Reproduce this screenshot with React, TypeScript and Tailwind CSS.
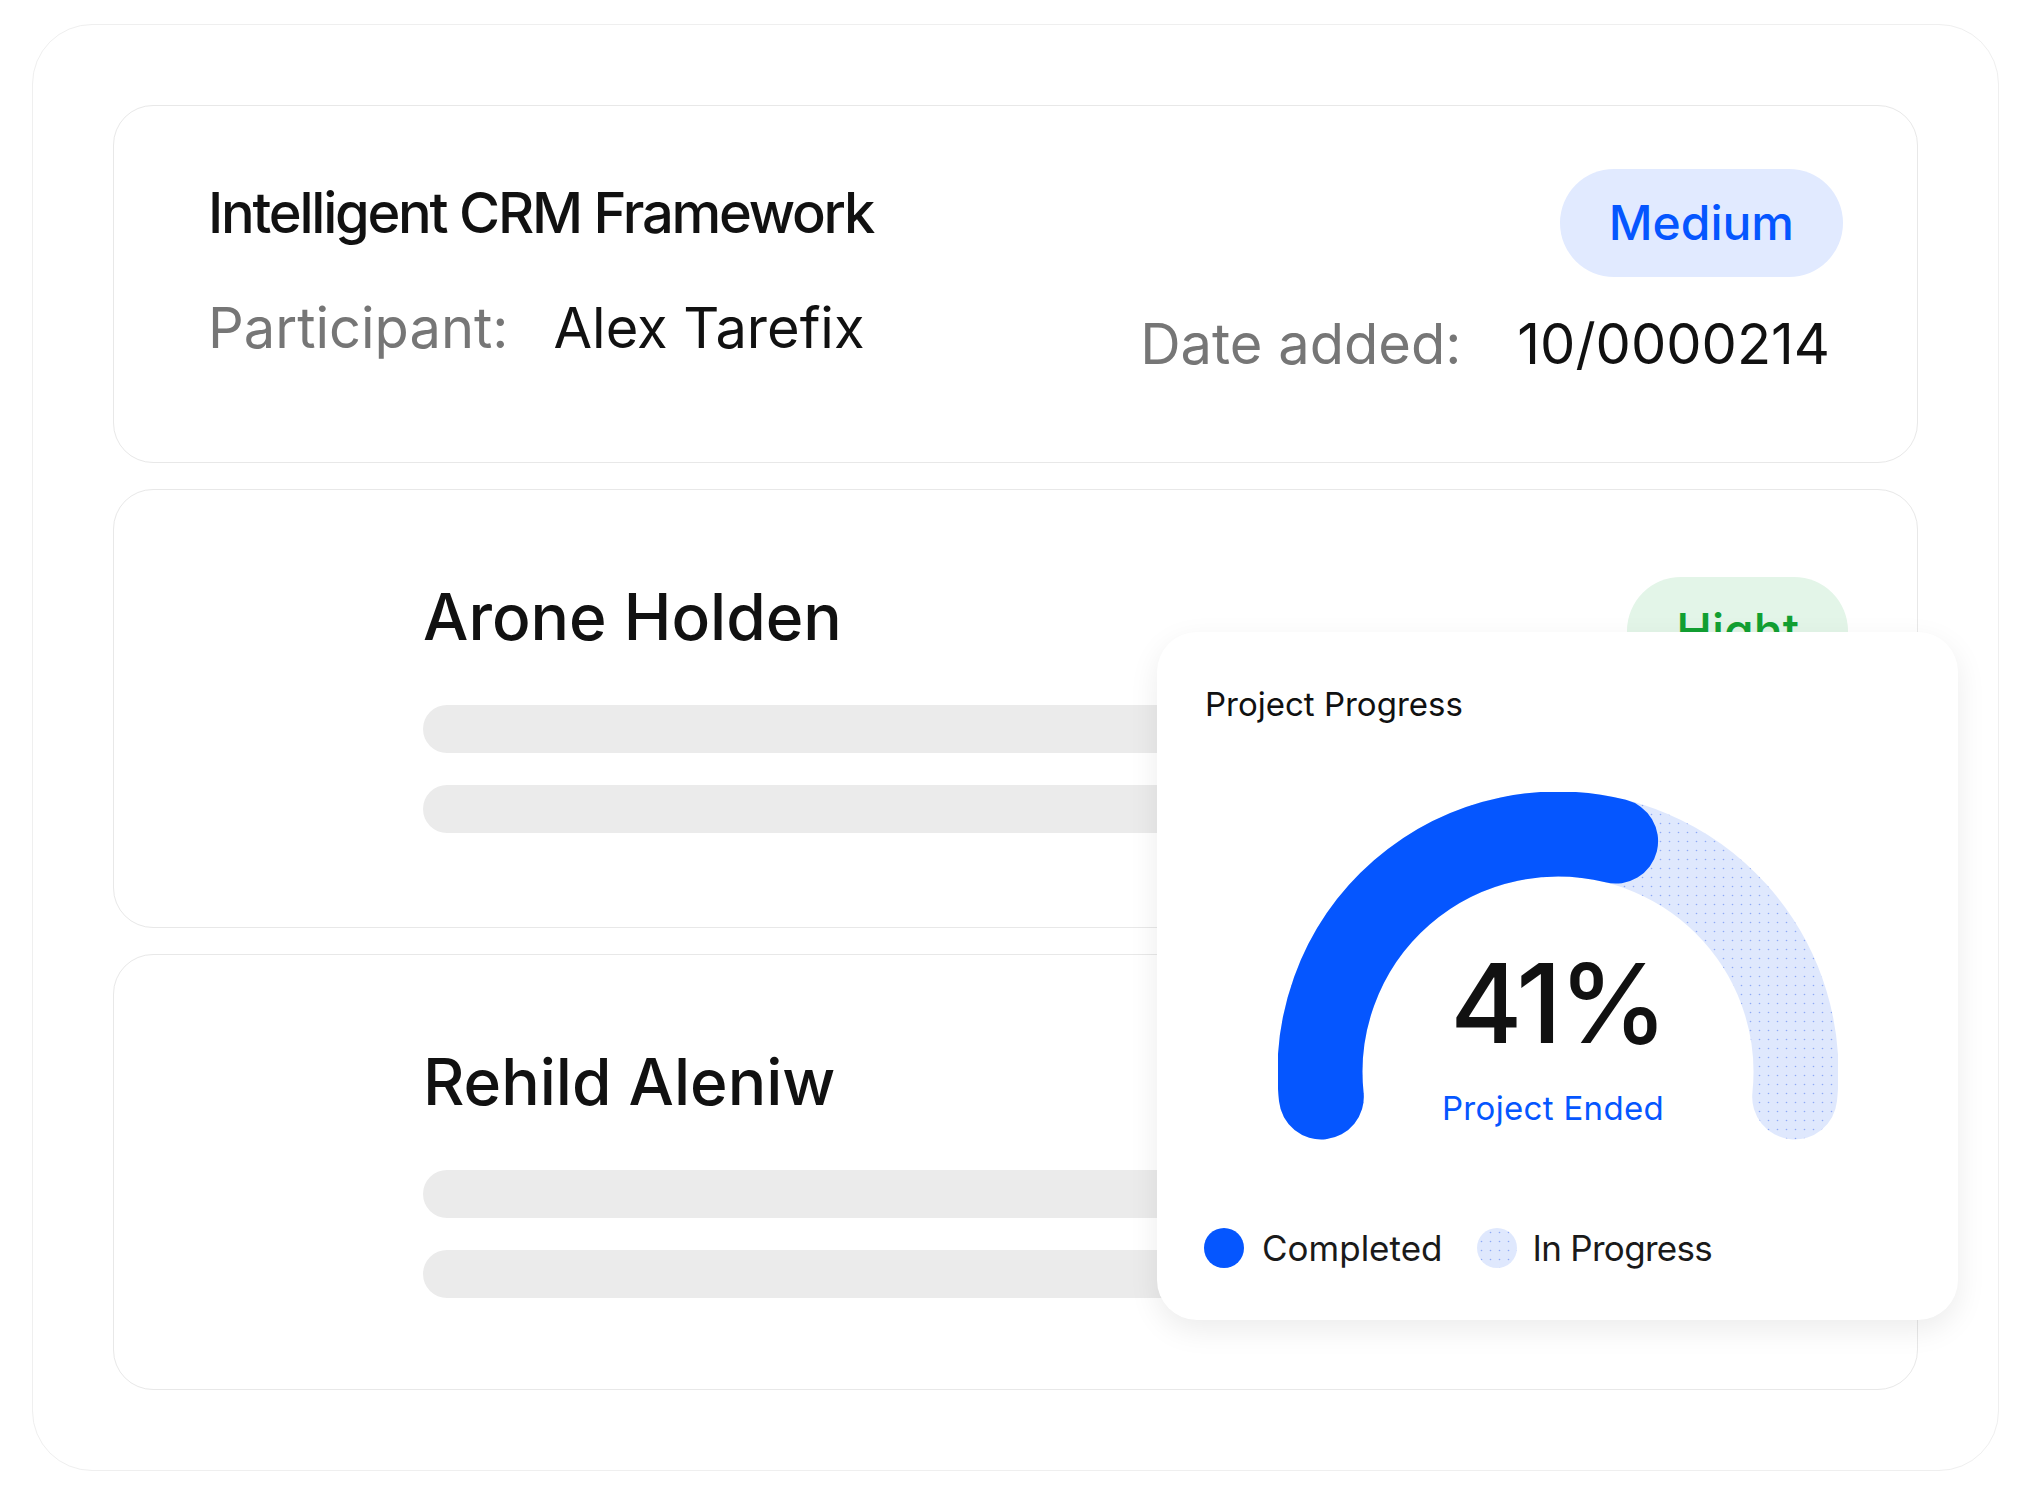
import React from 'react';

const font = { fontFamily: 'Inter, "Noto Sans", sans-serif' };

// gauge geometry (svg box 560x360, centre 280,280)
const CX = 280;
const CY = 280;
const R = 238;
function pt(deg: number) {
  const a = (deg * Math.PI) / 180;
  return `${(CX + R * Math.cos(a)).toFixed(1)} ${(CY - R * Math.sin(a)).toFixed(1)}`;
}
const trackPath = `M ${pt(186)} A ${R} ${R} 0 1 1 ${pt(-6)}`;
const progressPath = `M ${pt(186)} A ${R} ${R} 0 0 1 ${pt(76)}`;

function Badge({ label, tone }: { label: string; tone: 'blue' | 'green' }) {
  const cls =
    tone === 'blue'
      ? 'bg-[#e1eaff] text-[#0556ff]'
      : 'bg-[#e3f5e8] text-[#12a032]';
  return (
    <div className={`flex h-[108px] items-center rounded-full px-[49px] text-[48px] font-medium leading-none ${cls}`}>
      {label}
    </div>
  );
}

function PersonCard({ name, badge, height }: { name: string; badge?: React.ReactNode; height: string }) {
  return (
    <div className={`flex rounded-[40px] border border-[#e8e8e8] bg-white ${height}`}>
      <div className="flex flex-1 flex-col pl-[309px] pr-[80px] pt-[95px]">
        <div className="text-[64px] font-medium leading-[64px] text-[#111]">{name}</div>
        <div className="mt-[56px] h-[48px] w-full rounded-full bg-[#ebebeb]" />
        <div className="mt-[32px] h-[48px] w-full rounded-full bg-[#ebebeb]" />
      </div>
      {badge && <div className="pr-[69px] pt-[87px]">{badge}</div>}
    </div>
  );
}

function ProgressPopup() {
  return (
    <div className="absolute left-[1124px] top-[607px] flex h-[688px] w-[801px] flex-col rounded-[40px] bg-white shadow-[0_10px_30px_rgba(0,0,0,0.08)]">
      <div className="pl-[48px] pt-[56px] text-[33px] leading-[33px] text-[#111]">Project Progress</div>

      <div className="relative mx-auto mt-[71px] h-[360px] w-[560px]">
        <svg width="560" height="360" viewBox="0 0 560 360" className="block">
          <defs>
            <pattern id="dots" width="9" height="9" patternUnits="userSpaceOnUse">
              <rect width="9" height="9" fill="#dfe8fd" />
              <circle cx="4.5" cy="4.5" r="0.8" fill="#8ea9f5" />
            </pattern>
          </defs>
          <path d={trackPath} fill="none" stroke="url(#dots)" strokeWidth="85" strokeLinecap="round" />
          <path d={progressPath} fill="none" stroke="#0556ff" strokeWidth="85" strokeLinecap="round" />
        </svg>
        <div className="absolute inset-x-0 top-[156px] text-center text-[110px] font-medium leading-[110px] tracking-[-0.03em] text-[#111]">
          41%
        </div>
        <div className="absolute inset-x-0 top-[300px] pr-[9px] text-center text-[33px] leading-[33px] tracking-[0.01em] text-[#0556ff]">
          Project Ended
        </div>
      </div>

      <div className="mt-[76px] flex items-center pl-[47px] text-[35px] leading-none text-[#1a1a1a]">
        <span className="h-[40px] w-[40px] rounded-full bg-[#0556ff]" />
        <span className="ml-[18px]">Completed</span>
        <svg width="40" height="40" viewBox="0 0 40 40" className="ml-[35px]">
          <defs>
            <pattern id="dots2" width="9" height="9" patternUnits="userSpaceOnUse">
              <rect width="9" height="9" fill="#dfe8fd" />
              <circle cx="4.5" cy="4.5" r="0.8" fill="#8ea9f5" />
            </pattern>
          </defs>
          <circle cx="20" cy="20" r="20" fill="url(#dots2)" />
        </svg>
        <span className="ml-[15px] tracking-[-0.02em]">In Progress</span>
      </div>
    </div>
  );
}

export default function App() {
  return (
    <div className="min-h-screen bg-white pl-[32px] pt-[24px]" style={font}>
      <div className="relative flex w-[1967px] flex-col gap-[26px] rounded-[60px] border border-[#efefef] bg-white p-[80px]">
        {/* Project summary */}
        <div className="flex h-[358px] justify-between rounded-[40px] border border-[#e8e8e8] bg-white">
          <div className="pl-[94px] pt-[79px]">
            <div className="text-[56px] font-medium leading-[56px] tracking-[-0.04em] text-[#111]">
              Intelligent CRM Framework
            </div>
            <div className="mt-[59px] flex text-[56px] leading-[56px]">
              <span className="text-[#767676]">Participant:</span>
              <span className="ml-[45px] text-[#111]">Alex Tarefix</span>
            </div>
          </div>
          <div className="flex flex-col items-end pr-[74px] pt-[63px]">
            <Badge label="Medium" tone="blue" />
            <div className="mr-[13px] mt-[39px] flex text-[56px] leading-[56px]">
              <span className="text-[#767676]">Date added:</span>
              <span className="ml-[56px] text-[#111]">10/0000214</span>
            </div>
          </div>
        </div>

        <PersonCard name="Arone Holden" height="h-[439px]" badge={<Badge label="Hight" tone="green" />} />
        <PersonCard name="Rehild Aleniw" height="h-[436px]" />

        <ProgressPopup />
      </div>
    </div>
  );
}
